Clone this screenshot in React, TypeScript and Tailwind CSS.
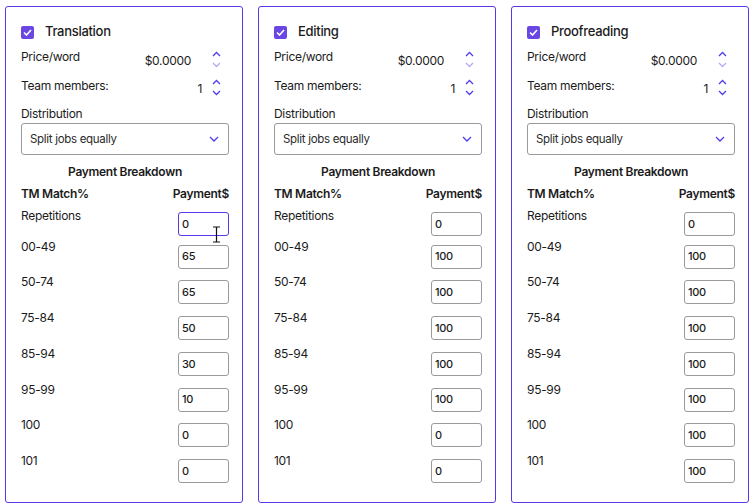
const rowLabels = ["Repetitions", "00-49", "50-74", "75-84", "85-94", "95-99", "100", "101"];

const services = [
  { title: "Translation", values: ["0", "65", "65", "50", "30", "10", "0", "0"], focused: true },
  { title: "Editing", values: ["0", "100", "100", "100", "100", "100", "0", "0"], focused: false },
  { title: "Proofreading", values: ["0", "100", "100", "100", "100", "100", "100", "100"], focused: false },
];

const Chevron = ({ up = false, light = false }: { up?: boolean; light?: boolean }) => (
  <svg width="9" height="6" viewBox="0 0 9 6" className="block">
    <path
      d={up ? "M1 5 L4.5 1.5 L8 5" : "M1 1 L4.5 4.5 L8 1"}
      fill="none"
      stroke={light ? "#b7a9f3" : "#4f3de8"}
      strokeWidth="1.3"
    />
  </svg>
);

const Spinner = ({ downLight = false }: { downLight?: boolean }) => (
  <div className="flex flex-col items-center gap-[5px] w-[10px]">
    <Chevron up />
    <Chevron light={downLight} />
  </div>
);

const ServiceCard = ({ title, values, focused }: { title: string; values: string[]; focused: boolean }) => (
  <div className="w-[238px] h-[497px] shrink-0 border border-[#5b35e8] rounded-[3px] pl-[15px] pr-[13px] pt-[16px] text-[#1b1b1b] tracking-[-0.3px]">
    {/* Header */}
    <div className="flex items-center h-[18px]">
      <div className="h-[13px] w-[13px] rounded-[2px] bg-[#6a46e2] flex items-center justify-center">
        <svg width="9" height="7" viewBox="0 0 9 7">
          <path d="M1 3.5 L3.5 6 L8 1" fill="none" stroke="#fff" strokeWidth="1.6" />
        </svg>
      </div>
      <span className="ml-[11px] text-[13px] font-medium">{title}</span>
    </div>

    {/* Price/word */}
    <div className="flex items-center h-[24px] mt-[6px] text-[12px]">
      <span className="self-start pt-[1px]">Price/word</span>
      <span className="ml-auto mr-[20px] mt-[4px]">$0.0000</span>
      <div className="mr-[8px]">
        <Spinner downLight />
      </div>
    </div>

    {/* Team members */}
    <div className="flex items-center h-[24px] mt-[4px] text-[12px]">
      <span className="self-start pt-[2px]">Team members:</span>
      <span className="ml-auto mr-[9px] mt-[4px]">1</span>
      <div className="mr-[8px]">
        <Spinner />
      </div>
    </div>

    <div className="mt-[7px] h-[16px] text-[12px] leading-[16px]">Distribution</div>
    <div className="mt-[1px] h-[32px] border border-[#9a9a9a] rounded-[3px] flex items-center justify-between pl-[8px] pr-[9px]">
      <span className="text-[11.5px] text-[#2a2a2a] mt-[2px]">Split jobs equally</span>
      <svg width="10" height="6" viewBox="0 0 10 6">
        <path d="M1 1 L5 5 L9 1" fill="none" stroke="#4f3de8" strokeWidth="1.3" />
      </svg>
    </div>

    <div className="mt-[9px] h-[16px] leading-[16px] text-center text-[12px] font-semibold">Payment Breakdown</div>
    <div className="mt-[6px] h-[16px] leading-[16px] flex justify-between text-[12px] font-semibold">
      <span>TM Match%</span>
      <span>Payment$</span>
    </div>

    <div className="mt-[7px]">
      {rowLabels.map((label, i) => (
        <div key={label} className={`flex justify-between items-start ${i === 0 ? "h-[30.5px]" : "h-[35.8px]"}`}>
          <span className="text-[12px] leading-[14px]">{label}</span>
          <div
            className={`relative w-[51px] h-[24px] rounded-[3px] border flex items-center pl-[3px] text-[11px] font-medium ${
              i === 0 ? "mt-[3px]" : "mt-[5px]"
            } ${i === 0 && focused ? "border-[#5b35e8]" : "border-[#9a9a9a]"}`}
          >
            {values[i]}
            {i === 0 && focused && (
              // mouse text cursor over the focused field
              <svg width="9" height="17" viewBox="0 0 9 17" className="absolute left-[33px] top-[13px]">
                <path d="M1 1 H8 M4.5 1 V16 M1 16 H8" fill="none" stroke="#111" strokeWidth="1.2" />
              </svg>
            )}
          </div>
        </div>
      ))}
    </div>
  </div>
);

export default function App() {
  return (
    <div className="w-[750px] h-[504px] bg-white flex gap-[15px] pl-[5px] pt-[6px] font-['Inter',sans-serif]">
      {services.map((s) => (
        <ServiceCard key={s.title} {...s} />
      ))}
    </div>
  );
}
